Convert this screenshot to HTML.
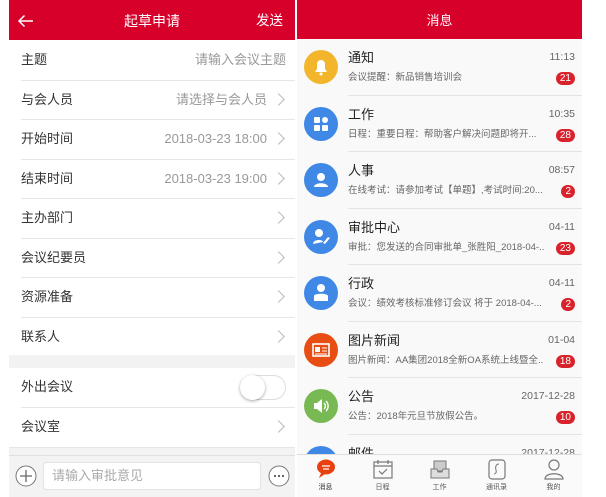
<!DOCTYPE html>
<html><head><meta charset="utf-8"><style>
*{margin:0;padding:0;box-sizing:border-box}
body{width:606px;height:497px;overflow:hidden;background:#fff;font-family:"Liberation Sans","Noto Sans CJK SC",sans-serif;position:relative}
.a{position:absolute}
#L{left:9px;top:0;width:286px;height:497px;background:#fff;overflow:hidden}
#R{left:297px;top:0;width:285px;height:497px;background:#f9f9f9;overflow:hidden}
.hd{position:absolute;left:0;top:0;right:0;height:40px;background:#d7002a;color:#fff}
.row{position:absolute;left:0;right:0;height:39.5px;font-size:13px;color:#333;line-height:38px}
.row .t{position:absolute;left:12px;top:0}
.row .v{position:absolute;right:28px;top:0;color:#999}
.row .line{position:absolute;left:12px;right:0;bottom:0;height:1px;background:#e6e6e6}
.chev{position:absolute;right:12px;top:14px;width:9px;height:9px;border-top:1.2px solid #bbb;border-right:1.2px solid #bbb;transform:rotate(45deg)}
.m{position:absolute;left:0;right:0;height:56.5px}
.m .ic{position:absolute;left:7px;top:11px;width:34px;height:34px;border-radius:50%}
.m .ti{position:absolute;left:51px;top:11px;font-size:13px;line-height:16px;color:#222}
.m .sb{position:absolute;left:51px;top:32px;font-size:9.5px;line-height:13px;color:#666;white-space:nowrap;width:196px;overflow:hidden;text-overflow:clip}
.m .tm{position:absolute;right:7px;top:12px;font-size:10.5px;line-height:12px;color:#666}
.m .bg{position:absolute;right:7px;top:33px;height:13px;min-width:13px;padding:0 4px;border-radius:7px;background:#d9232c;color:#fff;font-size:10px;line-height:13px;text-align:center}
.m .ln{position:absolute;left:51px;right:0;bottom:0;height:1px;background:#e4e4e4}
.tab{position:absolute;top:458px;width:57px;text-align:center;font-size:7px;line-height:9px;color:#555}
</style></head><body>
<div id="L" class="a">
 <div class="hd">
  <svg class="a" style="left:8px;top:14px" width="17" height="14" viewBox="0 0 17 14"><path d="M16 7H2M7.5 1.5L2 7l5.5 5.5" stroke="#fff" stroke-width="1.5" fill="none"/></svg>
  <div class="a" style="left:0;right:0;top:0;line-height:42px;text-align:center;font-size:14px">起草申请</div>
  <div class="a" style="right:12px;top:0;line-height:42px;font-size:13.5px">发送</div>
 </div>
 <div class="row" style="top:41px"><span class="t">主题</span><span class="v" style="right:9px">请输入会议主题</span><div class="line"></div></div>
 <div class="row" style="top:80.5px"><span class="t">与会人员</span><span class="v">请选择与会人员</span><div class="chev"></div><div class="line"></div></div>
 <div class="row" style="top:120px"><span class="t">开始时间</span><span class="v">2018-03-23 18:00</span><div class="chev"></div><div class="line"></div></div>
 <div class="row" style="top:159.5px"><span class="t">结束时间</span><span class="v">2018-03-23 19:00</span><div class="chev"></div><div class="line"></div></div>
 <div class="row" style="top:199px"><span class="t">主办部门</span><div class="chev"></div><div class="line"></div></div>
 <div class="row" style="top:238.5px"><span class="t">会议纪要员</span><div class="chev"></div><div class="line"></div></div>
 <div class="row" style="top:278px"><span class="t">资源准备</span><div class="chev"></div><div class="line"></div></div>
 <div class="row" style="top:317.5px"><span class="t">联系人</span><div class="chev"></div></div>
 <div class="a" style="left:0;right:0;top:355px;height:13px;background:#f2f2f2"></div>
 <div class="row" style="top:368px"><span class="t">外出会议</span><div class="line"></div>
  <div class="a" style="right:9px;top:7px;width:45px;height:25px;border:1px solid #ddd;border-radius:13px;background:#fff"></div>
  <div class="a" style="right:30px;top:7px;width:25px;height:25px;border-radius:50%;background:#fff;box-shadow:0 1px 3px rgba(0,0,0,.35)"></div>
 </div>
 <div class="row" style="top:407.5px"><span class="t">会议室</span><div class="chev"></div></div>
 <div class="a" style="left:0;right:0;top:447px;height:50px;background:#f3f3f3;border-top:1px solid #e5e5e5"></div>
 <div class="a" style="left:0;right:0;top:455px;height:1px;background:#e0e0e0"></div>
 <svg class="a" style="left:6px;top:465px" width="22" height="22"><circle cx="11" cy="11" r="10" fill="#fff" stroke="#777"/><path d="M11 5v12M5 11h12" stroke="#666" stroke-width="1.3"/></svg>
 <div class="a" style="left:34px;top:462px;width:218px;height:28px;background:#fff;border:1px solid #e3e3e3;border-radius:4px;font-size:13px;line-height:26px;color:#aaa;padding-left:8px">请输入审批意见</div>
 <svg class="a" style="left:259px;top:465px" width="22" height="22"><circle cx="11" cy="11" r="10" fill="#fff" stroke="#777"/><circle cx="7" cy="11" r="1.1" fill="#555"/><circle cx="11" cy="11" r="1.1" fill="#555"/><circle cx="15" cy="11" r="1.1" fill="#555"/></svg>
</div>

<div id="R" class="a">
 <div class="hd" style="height:39px"><div class="a" style="left:0;right:0;top:0;line-height:42px;text-align:center;font-size:13px">消息</div></div>
 <div class="m" style="top:39px"><div class="ic" style="background:#f3b52c"><svg width="34" height="34"><path d="M11 22h12l-2-3v-5a4 4 0 0 0-8 0v5z" fill="#fff"/><circle cx="17" cy="24" r="1.5" fill="#fff"/></svg></div><div class="ti">通知</div><div class="sb">会议提醒：新品销售培训会</div><div class="tm">11:13</div><div class="bg">21</div><div class="ln"></div></div>
 <div class="m" style="top:95.5px"><div class="ic" style="background:#3f88e6"><svg width="34" height="34"><rect x="10" y="10" width="6" height="6" rx="1" fill="#fff"/><circle cx="21" cy="13" r="3" fill="#fff"/><rect x="10" y="18" width="6" height="6" rx="1" fill="#fff"/><rect x="18" y="18" width="6" height="6" rx="1" fill="#fff"/></svg></div><div class="ti">工作</div><div class="sb">日程：重要日程：帮助客户解决问题即将开...</div><div class="tm">10:35</div><div class="bg">28</div><div class="ln"></div></div>
 <div class="m" style="top:152px"><div class="ic" style="background:#3f88e6"><svg width="34" height="34"><circle cx="17" cy="14" r="4" fill="#fff"/><path d="M10 24c0-5 14-5 14 0z" fill="#fff"/></svg></div><div class="ti">人事</div><div class="sb">在线考试：请参加考试【单题】,考试时间:20...</div><div class="tm">08:57</div><div class="bg">2</div><div class="ln"></div></div>
 <div class="m" style="top:208.5px"><div class="ic" style="background:#3f88e6"><svg width="34" height="34"><circle cx="15" cy="13" r="4" fill="#fff"/><path d="M9 24c0-5 10-5 10-2z" fill="#fff"/><path d="M19 23l5-6 2 1-5 6z" fill="#fff"/></svg></div><div class="ti">审批中心</div><div class="sb">审批：您发送的合同审批单_张胜阳_2018-04-...</div><div class="tm">04-11</div><div class="bg">23</div><div class="ln"></div></div>
 <div class="m" style="top:265px"><div class="ic" style="background:#3f88e6"><svg width="34" height="34"><circle cx="17" cy="12" r="4" fill="#fff"/><path d="M10 25v-5c0-3 14-3 14 0v5z" fill="#fff"/></svg></div><div class="ti">行政</div><div class="sb">会议：绩效考核标准修订会议 将于 2018-04-...</div><div class="tm">04-11</div><div class="bg">2</div><div class="ln"></div></div>
 <div class="m" style="top:321.5px"><div class="ic" style="background:#e84e14"><svg width="34" height="34"><rect x="9" y="11" width="16" height="12" fill="none" stroke="#fff" stroke-width="1.6"/><rect x="11" y="14" width="5" height="5" fill="#fff"/><path d="M18 15h5M18 18h5M11 21h12" stroke="#fff"/></svg></div><div class="ti">图片新闻</div><div class="sb">图片新闻：AA集团2018全新OA系统上线暨全...</div><div class="tm">01-04</div><div class="bg">18</div><div class="ln"></div></div>
 <div class="m" style="top:378px"><div class="ic" style="background:#79b954"><svg width="34" height="34"><path d="M10 14h3l5-4v14l-5-4h-3z" fill="#fff"/><path d="M20 14a4 4 0 0 1 0 6M22 12a7 7 0 0 1 0 10" stroke="#fff" stroke-width="1.4" fill="none"/></svg></div><div class="ti">公告</div><div class="sb">公告：2018年元旦节放假公告。</div><div class="tm">2017-12-28</div><div class="bg">10</div><div class="ln"></div></div>
 <div class="m" style="top:434.5px"><div class="ic" style="background:#3f88e6"></div><div class="ti">邮件</div><div class="tm">2017-12-28</div></div>
 <div class="a" style="left:0;right:0;top:454px;height:43px;background:#fafafa;border-top:1px solid #ddd"></div>
 <div class="tab" style="left:0"><svg width="22" height="22"><ellipse cx="11" cy="9" rx="9" ry="7.5" fill="#e8400e"/><path d="M6 15l-2 5 6-4z" fill="#e8400e"/><path d="M7 8h8M8 11h6" stroke="#fff" stroke-width="1.3"/></svg><div style="color:#333">消息</div></div>
 <div class="tab" style="left:57px"><svg width="22" height="22"><rect x="2" y="4" width="18" height="16" fill="none" stroke="#777" stroke-width="1.2"/><path d="M2 8h18M6 2v4M16 2v4M7 13l3 3 5-5" stroke="#777" stroke-width="1.2" fill="none"/></svg><div>日程</div></div>
 <div class="tab" style="left:114px"><svg width="22" height="22"><rect x="5" y="3" width="12" height="10" fill="#ccc" stroke="#777"/><path d="M2 11h6l1 3h4l1-3h6v9H2z" fill="#ddd" stroke="#777"/></svg><div>工作</div></div>
 <div class="tab" style="left:171px"><svg width="22" height="22"><rect x="3" y="2" width="16" height="19" rx="3" fill="none" stroke="#777" stroke-width="1.2"/><path d="M13 6c-3 0-4 3-3 6s-1 4-2 4" stroke="#777" fill="none"/></svg><div>通讯录</div></div>
 <div class="tab" style="left:228px"><svg width="22" height="22"><circle cx="11" cy="7" r="5" fill="none" stroke="#777" stroke-width="1.2"/><path d="M2 21c0-7 18-7 18 0z" fill="none" stroke="#777" stroke-width="1.2"/></svg><div>我的</div></div>
</div>
</body></html>
